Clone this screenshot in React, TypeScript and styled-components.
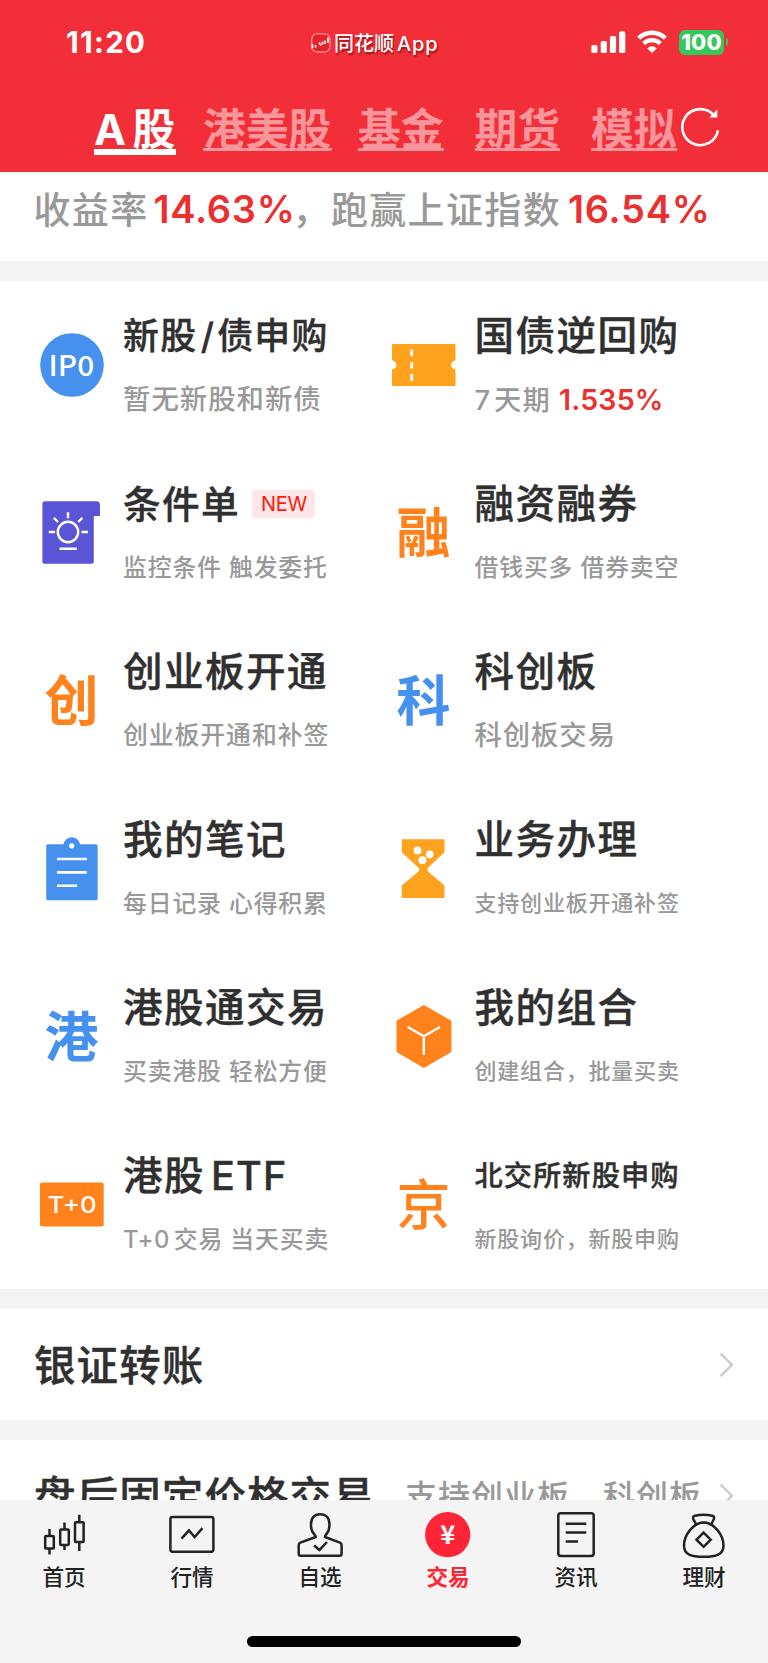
import React from 'react';
import styled, { createGlobalStyle } from 'styled-components';

const FONT = "Inter, 'Noto Sans CJK SC', sans-serif";
const BLUE = '#4691ee';
const ORANGE = '#ff821c';
const AMBER = '#ffa31f';

const GlobalStyle = createGlobalStyle`
  body { margin: 0; background: #f4f4f4; font-family: ${FONT}; }
  * { box-sizing: border-box; }
`;

const Screen = styled.div`
  display: flex;
  flex-direction: column;
  width: 768px;
  height: 1663px;
  overflow: hidden;
  background: #f4f4f4;
  white-space: nowrap;
`;

const Header = styled.header`
  height: 172px;
  flex: none;
  background: #f22f38;
  color: #fff;
`;

const StatusBar = styled.div`
  display: grid;
  grid-template-columns: 311px 1fr auto;
  align-items: center;
  height: 84px;
  padding: 0 40px 0 0;
`;

const Clock = styled.span`
  padding-left: 66px;
  font-size: 29.5px;
  font-weight: 750;
  letter-spacing: 1.3px;
`;

const AppBadge = styled.div`
  display: flex;
  align-items: center;
  gap: 3px;
  padding-top: 1px;
  font-size: 20px;
  font-weight: 500;
  line-height: 26px;
  text-shadow: 1px 2px 2px rgba(90, 0, 0, 0.65);
`;

const AppName = styled.span`
  padding-top: 2px;
`;

const StatusIcons = styled.div`
  display: flex;
  align-items: center;
`;

const Battery = styled.div`
  display: flex;
  align-items: center;
  justify-content: center;
  width: 45px;
  height: 25px;
  margin-left: 12px;
  border-radius: 6px;
  background: #34c759;
  font-size: 22px;
  font-weight: 800;
  letter-spacing: 0.1px;
`;

const BatteryTip = styled.span`
  width: 2px;
  height: 8px;
  margin-left: 2px;
  border-radius: 0 2px 2px 0;
  background: #34c759;
`;

/* Latin run inside Chinese text, kept slightly apart from its neighbours */
const Latin = styled.span<{ $before?: number; $after?: number; $spacing?: number }>`
  margin-left: ${p => p.$before ?? 0}px;
  margin-right: ${p => p.$after ?? 0}px;
  letter-spacing: ${p => p.$spacing ?? 0}px;
`;

const Markets = styled.nav`
  display: flex;
  align-items: flex-start;
  height: 88px;
  padding: 21px 0 0 94px;
`;

const Market = styled.a<{ $active?: boolean; $width: number; $gap: number }>`
  flex: none;
  width: ${p => p.$width}px;
  height: ${p => (p.$active ? 50 : 46)}px;
  margin-right: ${p => p.$gap}px;
  border-bottom: ${p => (p.$active ? 6 : 3)}px solid;
  color: ${p => (p.$active ? '#fff' : '#f9969b')};
  font-size: 42.8px;
  font-weight: 700;
  line-height: 49px;
`;

const RefreshIcon = styled.svg`
  width: 44px;
  height: 44px;
  flex: none;
`;

const Summary = styled.section`
  display: flex;
  height: 89px;
  flex: none;
  padding: 0 0 0 33.5px;
  background: #fff;
  color: #999;
  font-size: 37px;
  font-weight: 500;
  line-height: 78px;
  letter-spacing: 1.35px;
`;

const Percent = styled.b<{ $left: number; $width: number }>`
  width: ${p => p.$width}px;
  padding-left: ${p => p.$left}px;
  color: #ea3130;
  font-size: 38px;
  font-weight: 600;
  line-height: 75px;
  letter-spacing: 0.7px;
`;

const Content = styled.main`
  display: flex;
  flex-direction: column;
  flex: 1;
  min-height: 0;
  overflow: hidden;
  gap: 20px;
`;

const Services = styled.section`
  display: grid;
  grid-template-columns: 351.5px 351.5px;
  grid-auto-rows: 168px;
  flex: none;
  padding-left: 40px;
  background: #fff;
`;

const Service = styled.article`
  display: flex;
  align-items: center;
  gap: 19px;
`;

const ServiceIcon = styled.svg`
  width: 64px;
  height: 64px;
  flex: none;
  font-family: ${FONT};
`;

const ServiceText = styled.div`
  display: flex;
  flex-direction: column;
  height: 126px;
  margin-top: 6px;
`;

const Title = styled.h2<{ $pitch: number }>`
  display: flex;
  align-items: center;
  height: 63px;
  margin: 0;
  color: #303030;
  font-size: ${p => p.$pitch * 0.965}px;
  font-weight: 500;
  line-height: 65px;
  letter-spacing: ${p => p.$pitch * 0.035}px;
  -webkit-text-stroke: 0.4px;
`;

const Subtitle = styled.p<{ $pitch: number }>`
  margin: 0;
  color: #999;
  font-size: ${p => p.$pitch * 0.965}px;
  font-weight: 500;
  line-height: 63px;
  letter-spacing: ${p => p.$pitch * 0.035}px;
`;

const Rate = styled.span`
  color: #ea3130;
  font-size: 28.5px;
  font-weight: 600;
  letter-spacing: 0.2px;
`;

const NewTag = styled.span`
  display: flex;
  align-items: center;
  justify-content: center;
  width: 63px;
  height: 28px;
  margin: -1px 0 0 12.5px;
  border-radius: 4px;
  background: #ffe7e9;
  color: #ff1a0a;
  font-size: 20px;
  font-weight: 400;
  letter-spacing: -0.3px;
  -webkit-text-stroke: 0;
`;

const LinkRow = styled.section`
  display: flex;
  align-items: center;
  height: 111px;
  flex: none;
  padding: 0 34px;
  background: #fff;
`;

const LinkTitle = styled.h2`
  flex: 1;
  margin: -3px 0 0;
  color: #303030;
  font-size: 41.5px;
  font-weight: 500;
  letter-spacing: 1.1px;
  -webkit-text-stroke: 0.4px;
`;

const LinkNote = styled.span`
  margin: -3px 17px 0 0;
  color: #999;
  font-size: 32px;
  font-weight: 500;
  letter-spacing: 1px;
`;

const Chevron = styled.svg`
  width: 15px;
  height: 26px;
  flex: none;
`;

const BottomBar = styled.footer`
  display: flex;
  flex-direction: column;
  align-items: center;
  justify-content: space-between;
  height: 163px;
  flex: none;
  padding: 11px 0 16px;
  background: #f4f4f4;
`;

const Tabs = styled.nav`
  display: grid;
  grid-template-columns: repeat(6, 128px);
`;

const Tab = styled.a<{ $active?: boolean }>`
  display: flex;
  flex-direction: column;
  align-items: center;
  color: ${p => (p.$active ? '#ff2436' : '#222')};
  font-size: 21.6px;
  font-weight: ${p => (p.$active ? 700 : 500)};
  line-height: 36px;
`;

const TabIcon = styled.svg`
  width: 48px;
  height: 48px;
  fill: none;
  stroke: #222;
  stroke-width: 2.5;
  stroke-linejoin: round;
`;

const HomeIndicator = styled.div`
  width: 274px;
  height: 11px;
  border-radius: 6px;
  background: #000;
`;

const Glyph = ({ char, color, weight = 700 }: { char: string; color: string; weight?: number }) => (
  <ServiceIcon viewBox="0 0 64 64">
    <text x="31.5" y="52" textAnchor="middle" fontSize="54" fontWeight={weight} fill={color}>{char}</text>
  </ServiceIcon>
);

const IpoIcon = () => (
  <ServiceIcon viewBox="0 0 64 64">
    <circle cx="32" cy="32" r="31.8" fill={BLUE} />
    <text x="8.6" y="42.8" fontSize="28" fontWeight="500" fontFamily="'Noto Sans CJK SC'" fill="#fff" textLength="45.6" lengthAdjust="spacingAndGlyphs">IP0</text>
  </ServiceIcon>
);

const TicketIcon = () => (
  <ServiceIcon viewBox="0 0 64 64">
    <path d="M1 11H62.5Q63.5 11 63.5 12V27.6A4.4 4.4 0 0 0 63.5 36.4V52Q63.5 53 62.5 53H1Q0 53 0 52V36.4A4.4 4.4 0 0 0 0 27.6V12Q0 11 1 11Z" fill={AMBER} />
    <path d="M19.7 16.5V23.3M19.7 29V35.5M19.7 41V47.8" stroke="#fff" strokeWidth="2.8" />
  </ServiceIcon>
);

const ConditionIcon = () => (
  <ServiceIcon viewBox="0 0 64 64" fill="none">
    <path d="M5 0.3H56.5Q60 0.3 60 4V15H53.8V61Q53.8 62.8 52 62.8H4.2Q2.4 62.8 2.4 61V3Q2.4 0.3 5 0.3Z" fill="#5955d6" />
    <circle cx="28" cy="31" r="10.2" stroke="#fff" strokeWidth="2.4" />
    <path d="M28 11.3V17.2M13.8 16.8L18 21M42.4 16.8L38.2 21M8.8 31H15M41.5 31H48M19.6 47.7H36.8" stroke="#fff" strokeWidth="2.4" />
  </ServiceIcon>
);

const NotesIcon = () => (
  <ServiceIcon viewBox="0 0 64 64">
    <path d="M8 7.3H23.5A8.3 8.3 0 0 1 39.9 7.3H56Q57.7 7.3 57.7 9V61.6Q57.7 63.3 56 63.3H8Q6.2 63.3 6.2 61.6V9Q6.2 7.3 8 7.3Z" fill={BLUE} />
    <circle cx="31.7" cy="8.8" r="2.6" fill="#fff" />
    <path d="M17 22H46.8M17 35.4H46.8M17 48.8H37" stroke="#fff" strokeWidth="2.6" />
  </ServiceIcon>
);

const HourglassIcon = () => (
  <ServiceIcon viewBox="0 0 64 64">
    <path d="M9.8 2.3H52.5V15.2L35.5 31.2V34L52.5 48.5V61H9.8V48.5L27 34V31.2L9.8 15.2Z" fill={AMBER} />
    <g fill="#fff">
      <circle cx="25.5" cy="13.4" r="3.9" />
      <circle cx="37.7" cy="17.3" r="3.9" />
      <circle cx="30.4" cy="23.2" r="3.9" />
    </g>
  </ServiceIcon>
);

const PortfolioIcon = () => (
  <ServiceIcon viewBox="0 0 64 64" fill="none">
    <path d="M31.8 1L58.5 16.3V46.5L31.8 62L5.4 46.5V16.3Z" fill={ORANGE} stroke={ORANGE} strokeWidth="1.8" strokeLinejoin="round" />
    <path d="M15.6 22L31.8 31.2L48 22M31.8 31.2V49.8" stroke="#fff" strokeWidth="2.4" />
  </ServiceIcon>
);

const TPlusZeroIcon = () => (
  <ServiceIcon viewBox="0 0 64 64">
    <rect x="0" y="9.5" width="63.7" height="44" rx="2" fill={ORANGE} />
    <text x="7.6" y="39.8" fontSize="22.5" fontWeight="500" fill="#fff" textLength="49" lengthAdjust="spacingAndGlyphs">T+0</text>
  </ServiceIcon>
);

type ServiceItem = {
  icon: React.ReactNode;
  title: React.ReactNode;
  pitch: number;
  sub: React.ReactNode;
  subPitch: number;
  isNew?: boolean;
};

const services: ServiceItem[] = [
  {
    icon: <IpoIcon />,
    title: <>新股<Latin $before={3.5} $after={3}>/</Latin>债申购</>,
    pitch: 37.2,
    sub: '暂无新股和新债',
    subPitch: 28.4,
  },
  {
    icon: <TicketIcon />,
    title: '国债逆回购',
    pitch: 41,
    sub: <><Latin $after={4}>7</Latin>天期 <Rate>1.535%</Rate></>,
    subPitch: 28.3,
  },
  { icon: <ConditionIcon />, title: '条件单', pitch: 39, sub: '监控条件 触发委托', subPitch: 24.7, isNew: true },
  { icon: <Glyph char="融" color={ORANGE} />, title: '融资融券', pitch: 41, sub: '借钱买多 借券卖空', subPitch: 24.7 },
  { icon: <Glyph char="创" color={ORANGE} />, title: '创业板开通', pitch: 41, sub: '创业板开通和补签', subPitch: 25.8 },
  { icon: <Glyph char="科" color={BLUE} />, title: '科创板', pitch: 41, sub: '科创板交易', subPitch: 28.3 },
  { icon: <NotesIcon />, title: '我的笔记', pitch: 41, sub: '每日记录 心得积累', subPitch: 24.7 },
  { icon: <HourglassIcon />, title: '业务办理', pitch: 41, sub: '支持创业板开通补签', subPitch: 22.8 },
  { icon: <Glyph char="港" color={BLUE} />, title: '港股通交易', pitch: 41, sub: '买卖港股 轻松方便', subPitch: 24.7 },
  { icon: <PortfolioIcon />, title: '我的组合', pitch: 41, sub: '创建组合，批量买卖', subPitch: 22.8 },
  {
    icon: <TPlusZeroIcon />,
    title: <>港股<Latin $before={6} $spacing={1.2}>ETF</Latin></>,
    pitch: 41,
    sub: <><Latin $after={4} $spacing={0.5}>T+0</Latin>交易 当天买卖</>,
    subPitch: 24.7,
  },
  {
    icon: <Glyph char="京" color={ORANGE} weight={500} />,
    title: '北交所新股申购',
    pitch: 29.3,
    sub: '新股询价，新股申购',
    subPitch: 22.8,
  },
];

const tabs: { label: string; active?: boolean; art: React.ReactNode }[] = [
  {
    label: '首页',
    art: (
      <>
        <rect x="5.2" y="25" width="8.6" height="12.6" rx="0.8" />
        <rect x="20.2" y="18.5" width="8.6" height="15.4" rx="0.8" />
        <rect x="35" y="11.3" width="8.6" height="19.8" rx="0.8" />
        <path d="M9.5 18V25M9.5 37.6V43.6M24.5 11.4V18.5M24.5 33.9V39M39.3 3.8V11.3M39.3 31.1V40" />
      </>
    ),
  },
  {
    label: '行情',
    art: (
      <>
        <rect x="2.4" y="6" width="43" height="34.8" rx="2.2" />
        <path d="M13.5 27.7L21 19.4L26.6 26L34.5 17.2" strokeLinejoin="miter" />
      </>
    ),
  },
  {
    label: '自选',
    art: (
      <>
        <path d="M19.7 26C19.7 23 15 22.5 15 15V13C15 7 18.5 3.3 24.2 3.3S33.4 7 33.4 13V15C33.4 22.5 28.9 23 28.9 26L44 31.6Q45.6 32.4 45.6 34V42.8Q45.6 44.8 43.6 44.8H4.7Q2.7 44.8 2.7 42.8V34Q2.7 32.4 4.4 31.6Z" />
        <path d="M18.2 34.5L23.4 39L31 31" strokeLinejoin="miter" />
      </>
    ),
  },
  {
    label: '交易',
    active: true,
    art: (
      <>
        <circle cx="23.7" cy="23.7" r="22.6" fill="#ff2436" stroke="none" />
        <text x="23.8" y="33.4" textAnchor="middle" fontSize="25.5" fontWeight="700" fontFamily="'Noto Sans CJK SC'" fill="#fff" stroke="none">¥</text>
      </>
    ),
  },
  {
    label: '资讯',
    art: (
      <>
        <rect x="6.3" y="2.2" width="35.4" height="42.8" rx="2.4" />
        <path d="M13.7 12.7H34.3M13.7 21.6H34.3M13.7 30.4H26" />
      </>
    ),
  },
  {
    label: '理财',
    art: (
      <>
        <path d="M16 13L13.4 8.3Q12.2 5.6 15 4.7Q23.5 3 32.3 4.7Q35 5.6 33.8 8.3L31.4 13" />
        <path d="M23.7 11.6C34 11.6 43.5 24 43.5 34.5C43.5 43.8 36 45.8 23.7 45.8S4 43.8 4 34.5C4 24 13.4 11.6 23.7 11.6Z" />
        <path d="M23.6 21.6L30.7 28.7L23.6 35.8L16.5 28.7Z" strokeLinejoin="miter" />
      </>
    ),
  },
];

const ChevronIcon = () => (
  <Chevron viewBox="0 0 15 26" fill="none">
    <path d="M1.5 1.5L13 12.8L1.5 24.2" stroke="#ccc" strokeWidth="2.4" />
  </Chevron>
);

export default function App() {
  return (
    <Screen>
      <GlobalStyle />
      <Header>
        <StatusBar>
          <Clock>11:20</Clock>
          <AppBadge>
            <svg width="20" height="20" viewBox="0 0 20 20" fill="none">
              <rect x="0.8" y="0.8" width="18.2" height="18.2" rx="5.5" fill="#e3222c" stroke="#f79296" strokeWidth="1.3" />
              <path d="M1.5 11V15M4.5 12V14.5M8 9.5L10 12.5M11.5 8.5V11.5M14 7.5V11M17 4.5V10" stroke="#fff" strokeWidth="1.6" />
            </svg>
            <AppName>同花顺<Latin $before={3} $spacing={0.9}>App</Latin></AppName>
          </AppBadge>
          <StatusIcons>
            <svg width="35" height="23" viewBox="0 0 35 23" fill="#fff">
              <rect x="0.3" y="14" width="6.2" height="8" rx="1.8" />
              <rect x="9.7" y="10" width="6.2" height="12" rx="1.8" />
              <rect x="18.9" y="5" width="6.2" height="17" rx="1.8" />
              <rect x="28.1" y="0.3" width="6.2" height="21.7" rx="1.8" />
            </svg>
            <svg width="30" height="24" viewBox="0 0 30 24" fill="none" style={{ marginLeft: 11 }}>
              <path d="M1.6 8.2C9 1 21 1 28.4 8.2" stroke="#fff" strokeWidth="4.4" />
              <path d="M6.6 13.4C11.2 9 18.8 9 23.4 13.4" stroke="#fff" strokeWidth="4.2" />
              <path d="M10.4 18.4C12.8 15.6 17.2 15.6 19.6 18.4L15 23Z" fill="#fff" />
            </svg>
            <Battery>100</Battery>
            <BatteryTip />
          </StatusIcons>
        </StatusBar>
        <Markets>
          <Market $active $width={82} $gap={27}><Latin $after={6.5}>A</Latin>股</Market>
          <Market $width={128.5} $gap={26.5}>港美股</Market>
          <Market $width={85.5} $gap={31}>基金</Market>
          <Market $width={85.5} $gap={31}>期货</Market>
          <Market $width={85.5} $gap={1}>模拟</Market>
          <RefreshIcon viewBox="0 0 44 44" fill="none">
            <path d="M35.6 10A18 18 0 1 0 40 25.2" stroke="#fff" strokeWidth="2.6" />
            <path d="M39.3 4.5V12.6H31.2Z" fill="#fff" />
          </RefreshIcon>
        </Markets>
      </Header>
      <Content>
        <Summary>
          收益率<Percent $left={5} $width={144}>14.63%</Percent>，跑赢上证指数<Percent $left={7} $width={150}>16.54%</Percent>
        </Summary>
        <Services>
          {services.map((s, i) => (
            <Service key={i}>
              {s.icon}
              <ServiceText>
                <Title $pitch={s.pitch}>
                  {s.title}
                  {s.isNew && <NewTag>NEW</NewTag>}
                </Title>
                <Subtitle $pitch={s.subPitch}>{s.sub}</Subtitle>
              </ServiceText>
            </Service>
          ))}
        </Services>
        <LinkRow>
          <LinkTitle>银证转账</LinkTitle>
          <ChevronIcon />
        </LinkRow>
        <LinkRow>
          <LinkTitle>盘后固定价格交易</LinkTitle>
          <LinkNote>支持创业板、科创板</LinkNote>
          <ChevronIcon />
        </LinkRow>
      </Content>
      <BottomBar>
        <Tabs>
          {tabs.map(t => (
            <Tab key={t.label} $active={t.active}>
              <TabIcon viewBox="0 0 48 48">{t.art}</TabIcon>
              {t.label}
            </Tab>
          ))}
        </Tabs>
        <HomeIndicator />
      </BottomBar>
    </Screen>
  );
}
